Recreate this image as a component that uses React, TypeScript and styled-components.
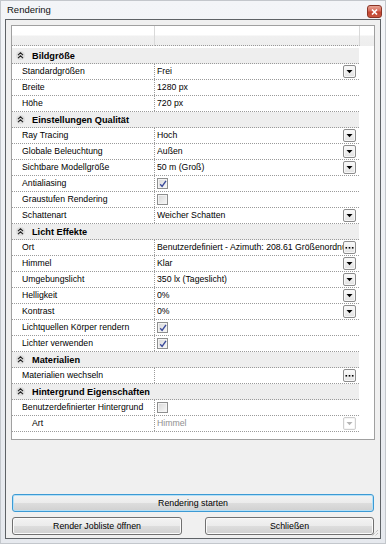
import React from "react";
import styled, { createGlobalStyle } from "styled-components";

type Kind = "text" | "select" | "dots" | "check";

interface Row {
  label: string;
  value?: string;
  kind: Kind;
  checked?: boolean;
  disabled?: boolean;
  indent?: boolean;
}

interface Section {
  title: string;
  rows: Row[];
}

const sections: Section[] = [
  {
    title: "Bildgröße",
    rows: [
      { label: "Standardgrößen", value: "Frei", kind: "select" },
      { label: "Breite", value: "1280 px", kind: "text" },
      { label: "Höhe", value: "720 px", kind: "text" },
    ],
  },
  {
    title: "Einstellungen Qualität",
    rows: [
      { label: "Ray Tracing", value: "Hoch", kind: "select" },
      { label: "Globale Beleuchtung", value: "Außen", kind: "select" },
      { label: "Sichtbare Modellgröße", value: "50 m (Groß)", kind: "select" },
      { label: "Antialiasing", kind: "check", checked: true },
      { label: "Graustufen Rendering", kind: "check", checked: false },
      { label: "Schattenart", value: "Weicher Schatten", kind: "select" },
    ],
  },
  {
    title: "Licht Effekte",
    rows: [
      {
        label: "Ort",
        value: "Benutzerdefiniert - Azimuth: 208.61 Größenordnung: 10.00",
        kind: "dots",
      },
      { label: "Himmel", value: "Klar", kind: "select" },
      { label: "Umgebungslicht", value: "350 lx (Tageslicht)", kind: "select" },
      { label: "Helligkeit", value: "0%", kind: "select" },
      { label: "Kontrast", value: "0%", kind: "select" },
      { label: "Lichtquellen Körper rendern", kind: "check", checked: true },
      { label: "Lichter verwenden", kind: "check", checked: true },
    ],
  },
  {
    title: "Materialien",
    rows: [{ label: "Materialien wechseln", value: "", kind: "dots" }],
  },
  {
    title: "Hintergrund Eigenschaften",
    rows: [
      { label: "Benutzerdefinierter Hintergrund", kind: "check", checked: false },
      { label: "Art", value: "Himmel", kind: "select", disabled: true, indent: true },
    ],
  },
];

const GlobalStyle = createGlobalStyle`
  html, body {
    margin: 0;
    padding: 0;
    background: #ffffff;
  }
  body {
    font-family: "Liberation Sans", Arial, sans-serif;
  }
  * {
    box-sizing: border-box;
  }
`;

const Window = styled.div`
  width: 386px;
  height: 544px;
  display: flex;
  flex-direction: column;
  padding: 0 5px 5px 5px;
  background: linear-gradient(#f3f5f8, #e6e9ee);
  box-shadow: inset 0 0 0 1px #c3c7cc;
`;

const TitleBar = styled.div`
  height: 19px;
  margin: 0 -4px;
  padding: 0 3px 1px 6px;
  display: flex;
  align-items: flex-end;
  justify-content: space-between;
`;

const TitleText = styled.span`
  align-self: center;
  font-size: 9.5px;
  color: #111;
`;

const CloseButton = styled.div`
  width: 15px;
  height: 13px;
  border: 1px solid #8a3426;
  border-radius: 3px;
  background: linear-gradient(#e8a596 0%, #d66a58 45%, #c24430 55%, #c9563f 100%);
  display: flex;
  align-items: center;
  justify-content: center;
`;

const Client = styled.div`
  position: relative;
  flex: 1;
  display: flex;
  flex-direction: column;
  padding: 5px 5px 3px 5px;
  border: 1px solid #5e6266;
  background: #f0f0f0;
`;

const Panel = styled.div`
  height: 415px;
  display: flex;
  flex-direction: column;
  border: 1px solid #a0a0a0;
  background: #ffffff;
`;

const GridHeader = styled.div`
  display: flex;
  height: 20px;
  background: linear-gradient(#ffffff 0%, #ffffff 45%, #f0f0f0 50%, #eeeeee 100%);
`;

const HeaderCell = styled.div<{ $w: number }>`
  width: ${(p) => p.$w}px;
  border-right: 1px solid #d9d9d9;
  border-bottom: 1px dotted #9a9a9a;
`;

const Rows = styled.div`
  width: 347px;
  margin-top: 2px;
  display: flex;
  flex-direction: column;
`;

const CategoryRow = styled.div`
  height: 16px;
  display: flex;
  align-items: center;
  gap: 7px;
  padding-left: 4px;
  background: #eeeeee;
  border-bottom: 1px dotted #9a9a9a;
  font-size: 9.2px;
  font-weight: bold;
  color: #000;
`;

const PropRow = styled.div`
  height: 16px;
  display: flex;
  border-bottom: 1px dotted #9a9a9a;
  font-size: 8.7px;
  color: #000;
`;

const LabelCell = styled.div<{ $indent?: boolean }>`
  width: 143px;
  flex: none;
  padding-left: ${(p) => (p.$indent ? 20 : 10)}px;
  line-height: 15px;
  border-right: 1px dotted #9a9a9a;
  white-space: nowrap;
  overflow: hidden;
`;

const ValueCell = styled.div`
  flex: 1;
  min-width: 0;
  display: flex;
  align-items: center;
  padding: 0 3px 0 2px;
`;

const ValueText = styled.span<{ $disabled?: boolean }>`
  flex: 1;
  min-width: 0;
  overflow: hidden;
  white-space: nowrap;
  line-height: 15px;
  color: ${(p) => (p.$disabled ? "#8f8f8f" : "#000")};
`;

const EditButton = styled.div<{ $disabled?: boolean }>`
  width: 13px;
  height: 13px;
  flex: none;
  display: flex;
  align-items: center;
  justify-content: center;
  border: 1px solid ${(p) => (p.$disabled ? "#cfcfcf" : "#8d8d8d")};
  border-radius: 2px;
  background: ${(p) =>
    p.$disabled ? "#ffffff" : "linear-gradient(#fbfbfb, #e2e2e2)"};
  box-shadow: inset 0 0 0 1px ${(p) => (p.$disabled ? "#f6f6f6" : "#f7f7f7")};
`;

const CheckBox = styled.div`
  width: 11px;
  height: 11px;
  border: 1px solid #8e8f8f;
  background: linear-gradient(135deg, #d8d8d8, #f9f9f9);
  box-shadow: inset 0 0 0 1px #f4f4f4;
  display: flex;
  align-items: center;
  justify-content: center;
`;

const Spacer = styled.div`
  flex: 1;
`;

const PushButton = styled.button<{ $default?: boolean }>`
  height: 18px;
  padding: 0;
  border-radius: 3px;
  border: 1px solid ${(p) => (p.$default ? "#3c9ad4" : "#707070")};
  background: linear-gradient(#f3f3f3 0%, #ebebeb 50%, #dddddd 51%, #d0d0d0 100%);
  box-shadow: inset 0 0 0 1px ${(p) => (p.$default ? "#b4e0f7" : "#fbfbfb")};
  font-family: "Liberation Sans", Arial, sans-serif;
  font-size: 8.8px;
  color: #000;
`;

const WideButton = styled(PushButton)`
  margin: 0 1px;
`;

const ButtonRow = styled.div`
  margin: 5px 1px 0 1px;
  display: grid;
  grid-template-columns: 170px 169px;
  justify-content: space-between;
`;

const Grip = styled.svg`
  position: absolute;
  right: 1px;
  bottom: 1px;
`;

function Collapse() {
  return (
    <svg width="9" height="9" viewBox="0 0 9 9">
      <circle cx="4.5" cy="4.5" r="4.5" fill="#dedede" />
      <path d="M2 4.2 L4.5 1.8 L7 4.2 M2 7.2 L4.5 4.8 L7 7.2" fill="none" stroke="#222" strokeWidth="1.1" />
    </svg>
  );
}

function Arrow({ disabled }: { disabled?: boolean }) {
  return (
    <svg width="7" height="5" viewBox="0 0 7 5">
      <path d="M0.5 1 L6.5 1 L3.5 4.2 Z" fill={disabled ? "#b5b5b5" : "#000"} />
    </svg>
  );
}

function Dots() {
  return (
    <svg width="9" height="3" viewBox="0 0 9 3">
      <rect x="0.5" y="1" width="1.6" height="1.6" fill="#000" />
      <rect x="3.7" y="1" width="1.6" height="1.6" fill="#000" />
      <rect x="6.9" y="1" width="1.6" height="1.6" fill="#000" />
    </svg>
  );
}

function Check({ checked }: { checked?: boolean }) {
  return (
    <CheckBox>
      {checked && (
        <svg width="8" height="8" viewBox="0 0 8 8">
          <path d="M1.2 4.3 L3.1 6.4 L7 0.8" fill="none" stroke="#3a4a9a" strokeWidth="1.4" />
        </svg>
      )}
    </CheckBox>
  );
}

function Value({ row }: { row: Row }) {
  if (row.kind === "check") {
    return (
      <ValueCell>
        <Check checked={row.checked} />
      </ValueCell>
    );
  }
  return (
    <ValueCell>
      <ValueText $disabled={row.disabled}>{row.value}</ValueText>
      {row.kind === "select" && (
        <EditButton $disabled={row.disabled}>
          <Arrow disabled={row.disabled} />
        </EditButton>
      )}
      {row.kind === "dots" && (
        <EditButton>
          <Dots />
        </EditButton>
      )}
    </ValueCell>
  );
}

export default function App() {
  return (
    <>
      <GlobalStyle />
      <Window>
        <TitleBar>
          <TitleText>Rendering</TitleText>
          <CloseButton>
            <svg width="7" height="6" viewBox="0 0 7 6">
              <path d="M1 0.5 L6 5.5 M6 0.5 L1 5.5" stroke="#fff" strokeWidth="1.6" />
            </svg>
          </CloseButton>
        </TitleBar>
        <Client>
          <Panel>
            <GridHeader>
              <HeaderCell $w={143} />
              <HeaderCell $w={205} />
            </GridHeader>
            <Rows>
              {sections.map((s) => (
                <React.Fragment key={s.title}>
                  <CategoryRow>
                    <Collapse />
                    {s.title}
                  </CategoryRow>
                  {s.rows.map((r) => (
                    <PropRow key={r.label}>
                      <LabelCell $indent={r.indent}>{r.label}</LabelCell>
                      <Value row={r} />
                    </PropRow>
                  ))}
                </React.Fragment>
              ))}
            </Rows>
          </Panel>
          <Spacer />
          <WideButton $default>Rendering starten</WideButton>
          <ButtonRow>
            <PushButton>Render Jobliste öffnen</PushButton>
            <PushButton>Schließen</PushButton>
          </ButtonRow>
          <Grip width="8" height="8" viewBox="0 0 8 8">
            <path d="M7 1 L1 7 M7 4 L4 7" stroke="#a8a8a8" strokeWidth="1" strokeDasharray="1 1" />
          </Grip>
        </Client>
      </Window>
    </>
  );
}
